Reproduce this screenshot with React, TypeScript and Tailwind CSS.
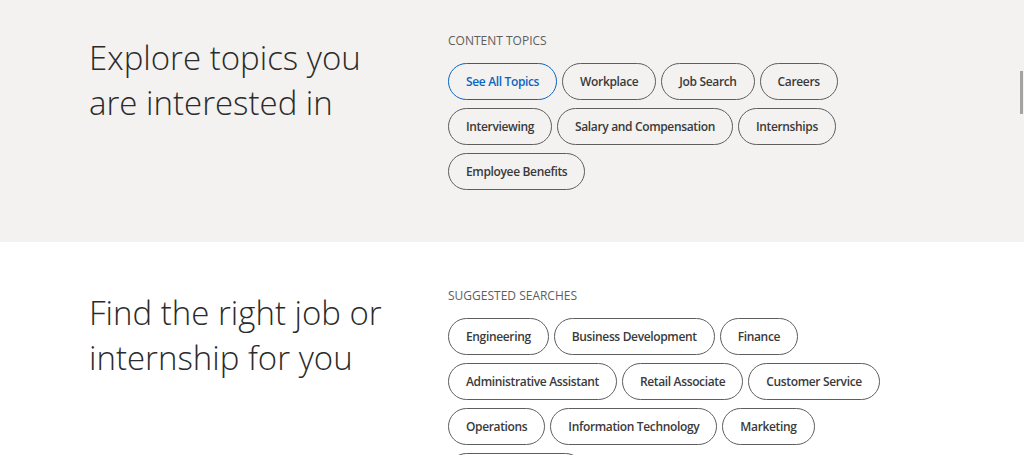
import React from 'react';

const contentTopics = [
  'See All Topics',
  'Workplace',
  'Job Search',
  'Careers',
  'Interviewing',
  'Salary and Compensation',
  'Internships',
  'Employee Benefits',
];

const suggestedSearches = [
  'Engineering',
  'Business Development',
  'Finance',
  'Administrative Assistant',
  'Retail Associate',
  'Customer Service',
  'Operations',
  'Information Technology',
  'Marketing',
  'Human Resources',
];

const Pill: React.FC<{ label: string; active?: boolean }> = ({ label, active }) => (
  <a
    href="#"
    className={`h-[37px] inline-flex items-center px-[17px] rounded-full border text-[12px] tracking-[-0.35px] font-semibold whitespace-nowrap ${
      active ? 'border-[#0a66c2] text-[#0a66c2]' : 'border-[#5e5e5e] text-[#3a3a3a]'
    }`}
  >
    {label}
  </a>
);

const Section: React.FC<{
  title: string[];
  label: string;
  items: string[];
  gray?: boolean;
  top: string;
}> = ({ title, label, items, gray, top }) => (
  <section className={`${gray ? 'bg-[#f3f2f0]' : 'bg-white'} ${top} pb-[52px]`}>
    <div className="flex pl-[89px]">
      <h2 className="w-[359px] text-[33px] leading-[45px] font-light text-[#2b2b2b] pt-[4px]">
        {title.map((line) => (
          <div key={line}>{line}</div>
        ))}
      </h2>
      <div className="w-[486px]">
        <h3 className="text-[12px] leading-[20px] font-normal text-[#5e5e5e] uppercase mb-[12px]">
          {label}
        </h3>
        <div className="flex flex-wrap gap-x-[5px] gap-y-[8px]">
          {items.map((item, i) => (
            <Pill key={item} label={item} active={gray && i === 0} />
          ))}
        </div>
      </div>
    </div>
  </section>
);

export default function App() {
  return (
    <div className="relative h-[455px] overflow-hidden bg-white font-['Open_Sans',sans-serif]">
      <Section
        gray
        top="pt-[31px]"
        title={['Explore topics you', 'are interested in']}
        label="Content Topics"
        items={contentTopics}
      />
      <Section
        top="pt-[44px]"
        title={['Find the right job or', 'internship for you']}
        label="Suggested Searches"
        items={suggestedSearches}
      />
      {/* overlay scroll thumb */}
      <div className="absolute right-[1px] top-[71px] w-[3px] h-[43px] bg-[#a3a3a3]" />
    </div>
  );
}
